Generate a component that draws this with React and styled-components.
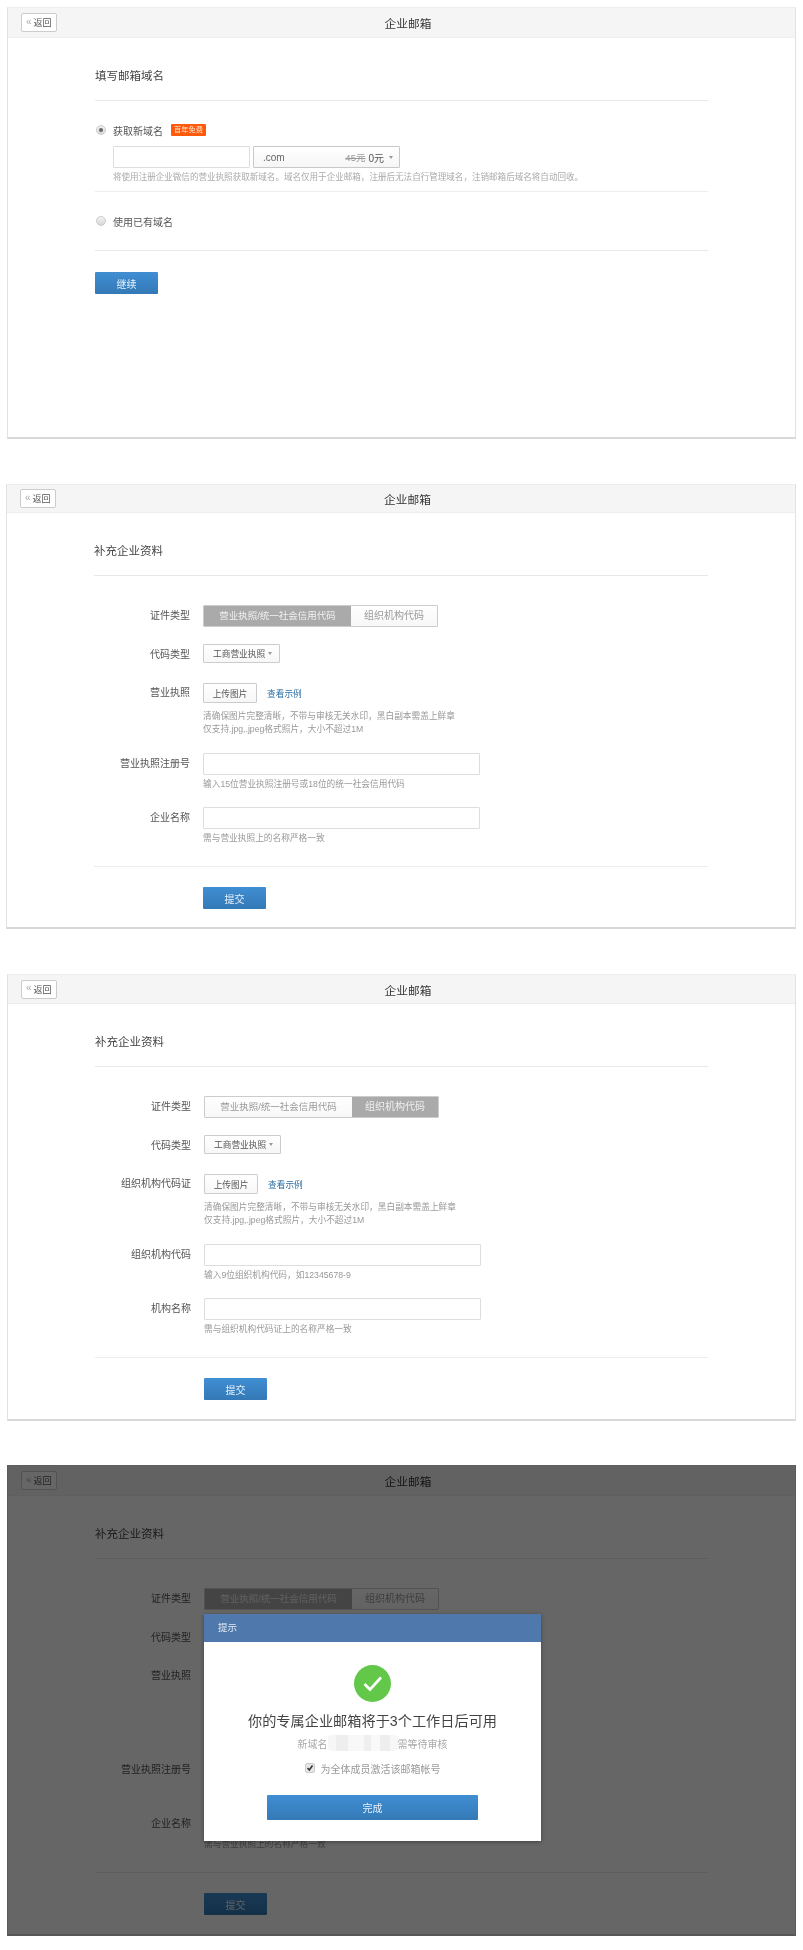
import React from "react";
import styled, { createGlobalStyle } from "styled-components";

const Global = createGlobalStyle`
  html, body { margin: 0; padding: 0; background: #fff; }
  * { box-sizing: border-box; }
  body { font-family: "Liberation Sans", "Noto Sans CJK SC", sans-serif; color: #333; }
`;

const Page = styled.div`
  width: 803px;
  height: 1950px;
  padding-top: 7px;
  overflow: hidden;
  filter: blur(0.45px);
`;

const Panel = styled.section`
  position: relative;
  width: ${(p) => p.$width || 789}px;
  min-height: ${(p) => p.$height}px;
  margin: ${(p) => p.$top || 0}px 0 0 ${(p) => p.$left}px;
  background: #fff;
  border: 1px solid #e2e2e2;
  border-top-color: #eee;
  border-bottom: 2px solid #d8d8d8;
`;

const Header = styled.header`
  display: grid;
  grid-template-columns: 1fr auto 1fr;
  align-items: center;
  height: ${(p) => p.$h}px;
  padding-left: 13px;
  background: #f5f5f5;
  border-bottom: 1px solid #eee;
`;

const BackButton = styled.button`
  justify-self: start;
  display: flex;
  align-items: center;
  gap: 2px;
  width: 36px;
  height: 19px;
  padding: 0 0 0 4px;
  font: 9px "Liberation Sans", "Noto Sans CJK SC", sans-serif;
  color: #555;
  background: #fff;
  border: 1px solid #ccc;
  border-radius: 2px;
  span { color: #aaa; font-size: 10px; line-height: 1; margin-top: -2px; }
`;

const Title = styled.h1`
  margin: 0;
  font-size: 11.7px;
  font-weight: 400;
  color: #333;
`;

const Body = styled.div`
  padding: 0 87px;
`;

const Heading = styled.h2`
  margin: 0;
  padding: 28px 0 14px;
  font-size: 11.5px;
  line-height: 20px;
  font-weight: 400;
  color: #444;
  border-bottom: 1px solid #e8e8e8;
`;

const OptionRow = styled.label`
  display: flex;
  align-items: center;
  height: 14px;
  margin-top: 22px;
  font-size: 10px;
  color: #555;
`;

const Radio = styled.span`
  position: relative;
  flex: none;
  width: 10px;
  height: 10px;
  margin: 0 7px 0 1px;
  border-radius: 50%;
  border: 1px solid #ccc;
  background: linear-gradient(#f2f2f2, #d8d8d8);
  ${(p) =>
    p.$on &&
    `&::after {
      content: "";
      position: absolute;
      left: 2px;
      top: 2px;
      width: 4px;
      height: 4px;
      border-radius: 50%;
      background: #666;
    }`}
`;

const Badge = styled.span`
  margin-left: 8px;
  width: 35px;
  height: 12px;
  line-height: 12px;
  text-align: center;
  font-size: 7.2px;
  color: #ffe3d0;
  background: #ff5a0a;
  border-radius: 1px;
`;

const DomainFields = styled.div`
  display: flex;
  gap: 3px;
  margin: 9px 0 0 18px;
`;

const TextInput = styled.div`
  width: ${(p) => p.$w}px;
  height: 22px;
  background: #fff;
  border: 1px solid #ddd;
  border-radius: 1px;
`;

const DomainSelect = styled.div`
  display: flex;
  align-items: center;
  width: 147px;
  height: 22px;
  padding: 0 6px 0 9px;
  font-size: 10px;
  color: #666;
  background: linear-gradient(#fff, #f6f6f6);
  border: 1px solid #c8c8c8;
  border-radius: 1px;
  s { margin-left: auto; color: #999; font-size: 9.5px; }
  b { margin: 0 5px 0 3px; font-weight: 400; color: #555; }
`;

const Caret = styled.i`
  display: inline-block;
  width: 0;
  height: 0;
  border: 2.5px solid transparent;
  border-top: 3px solid #999;
  border-bottom: 0;
`;

const DomainHint = styled.p`
  margin: 3px 0 0;
  padding: 0 0 8px 18px;
  font-size: 8.55px;
  line-height: 12px;
  color: #aaa;
  white-space: nowrap;
  border-bottom: 1px solid #eee;
`;

const SectionEnd = styled.div`
  margin-top: 22px;
  border-bottom: 1px solid #e8e8e8;
`;

const PrimaryButton = styled.button`
  display: block;
  width: ${(p) => p.$w || 63}px;
  height: ${(p) => p.$h || 22}px;
  margin: ${(p) => p.$m || 0};
  padding: 0;
  font: 10px "Liberation Sans", "Noto Sans CJK SC", sans-serif;
  color: #e6f1fb;
  background: linear-gradient(#408ed3, #3479b6);
  border: 0;
  border-radius: 1px;
`;

const Rows = styled.div`
  padding-top: 29px;
`;

const Row = styled.div`
  display: flex;
  align-items: flex-start;
  margin-top: ${(p) => p.$mt || 0}px;
`;

const Label = styled.div`
  flex: none;
  width: 96px;
  margin-right: 13px;
  height: ${(p) => p.$h}px;
  line-height: ${(p) => p.$h + (p.$nudge || 0)}px;
  font-size: 10px;
  text-align: right;
  color: #555;
  white-space: nowrap;
`;

const Field = styled.div`
  flex: none;
`;

const Segmented = styled.div`
  display: flex;
  width: 235px;
  height: 22px;
  border: 1px solid #ccc;
  border-radius: 1px;
`;

const Segment = styled.div`
  flex: ${(p) => (p.$wide ? "0 0 147px" : "1")};
  line-height: 20px;
  text-align: center;
  font-size: ${(p) => (p.$wide ? 9.5 : 10)}px;
  white-space: nowrap;
  color: ${(p) => (p.$on ? "#f0f0f0" : "#999")};
  background: ${(p) => (p.$on ? "#aaa" : "linear-gradient(#fff,#f7f7f7)")};
`;

const CodeSelect = styled.div`
  display: flex;
  align-items: center;
  gap: 3px;
  width: 77px;
  height: 19px;
  padding-left: 9px;
  font-size: 8.7px;
  color: #555;
  background: linear-gradient(#fff, #f7f7f7);
  border: 1px solid #ccc;
  border-radius: 1px;
`;

const UploadLine = styled.div`
  display: flex;
  align-items: center;
  gap: 10px;
`;

const UploadButton = styled.button`
  width: 54px;
  height: 20px;
  padding: 0;
  font: 8.7px "Liberation Sans", "Noto Sans CJK SC", sans-serif;
  color: #555;
  background: linear-gradient(#fff, #f7f7f7);
  border: 1px solid #ccc;
  border-radius: 1px;
`;

const SampleLink = styled.a`
  font-size: 8.7px;
  color: #2a6ea5;
`;

const Hint = styled.p`
  margin: ${(p) => p.$mt || 3}px 0 ${(p) => p.$mb || 0}px;
  font-size: 8.7px;
  line-height: 13px;
  color: #999;
  white-space: nowrap;
`;

const FormEnd = styled.div`
  margin-top: 21px;
  border-bottom: 1px solid #ececec;
`;

const Overlay = styled.div`
  position: absolute;
  inset: -1px -1px -2px -1px;
  background: rgba(0, 0, 0, 0.6);
`;

const Modal = styled.div`
  position: absolute;
  left: 197px;
  top: 149px;
  width: 337px;
  height: 227px;
  background: #fff;
  box-shadow: 0 1px 4px rgba(0, 0, 0, 0.35);
  display: flex;
  flex-direction: column;
  align-items: center;
`;

const ModalBar = styled.div`
  align-self: stretch;
  height: 28px;
  padding-left: 14px;
  line-height: 27px;
  font-size: 9.5px;
  color: #e4ecf5;
  background: #4f79ad;
`;

const SuccessIcon = styled.svg`
  display: block;
  width: 37px;
  height: 37px;
  margin-top: 23px;
`;

const ModalTitle = styled.h3`
  margin: 8px 0 0;
  font-size: 14.2px;
  line-height: 22px;
  font-weight: 400;
  color: #444;
  white-space: nowrap;
`;

const ModalSub = styled.div`
  display: flex;
  align-items: center;
  height: 16px;
  margin-top: 3px;
  font-size: 10px;
  color: #aaa;
`;

const Mosaic = styled.span`
  display: block;
  width: 70px;
  height: 16px;
  border-radius: 4px;
  background:
    linear-gradient(90deg, #f6f6f6 0 12%, #eeeeee 12% 28%, #f8f8f8 28% 52%, #efefef 52% 62%, #f9f9f9 62% 74%, #eeeeee 74% 88%, #f7f7f7 88%);
`;

const ModalCheck = styled.label`
  display: flex;
  align-items: center;
  gap: 6px;
  margin-top: 10px;
  height: 14px;
  font-size: 10px;
  color: #999;
`;

const CheckBox = styled.span`
  display: flex;
  align-items: center;
  justify-content: center;
  width: 10px;
  height: 10px;
  border: 1px solid #ccc;
  border-radius: 2px;
  background: #e6e6e6;
  svg { display: block; width: 8px; height: 8px; }
`;

const Radios = () => null;

function Shell({ title, left, top, height, headerH, width, children }) {
  return (
    <Panel $left={left} $top={top} $height={height} $width={width}>
      <Header $h={headerH}>
        <BackButton><span>«</span>返回</BackButton>
        <Title>企业邮箱</Title>
      </Header>
      {children}
    </Panel>
  );
}

function FormBody({ org, extra }) {
  return (
    <Body>
      <Heading>补充企业资料</Heading>
      <Rows>
        <Row>
          <Label $h={22}>证件类型</Label>
          <Field>
            <Segmented>
              <Segment $wide $on={!org}>营业执照/统一社会信用代码</Segment>
              <Segment $on={org}>组织机构代码</Segment>
            </Segmented>
          </Field>
        </Row>
        <Row $mt={17}>
          <Label $h={19} $nudge={2}>代码类型</Label>
          <Field>
            <CodeSelect>工商营业执照 <Caret /></CodeSelect>
          </Field>
        </Row>
        <Row $mt={20}>
          <Label $h={20}>{org ? "组织机构代码证" : "营业执照"}</Label>
          <Field>
            <UploadLine>
              <UploadButton>上传图片</UploadButton>
              <SampleLink>查看示例</SampleLink>
            </UploadLine>
            <Hint $mt={7} $mb={extra}>
              清确保图片完整清晰，不带与审核无关水印，黑白副本需盖上鲜章
              <br />
              仅支持.jpg,.jpeg格式照片，大小不超过1M
            </Hint>
          </Field>
        </Row>
        <Row $mt={17}>
          <Label $h={22}>{org ? "组织机构代码" : "营业执照注册号"}</Label>
          <Field>
            <TextInput $w={277} />
            <Hint>{org ? "输入9位组织机构代码，如12345678-9" : "输入15位营业执照注册号或18位的统一社会信用代码"}</Hint>
          </Field>
        </Row>
        <Row $mt={16}>
          <Label $h={22}>{org ? "机构名称" : "企业名称"}</Label>
          <Field>
            <TextInput $w={277} />
            <Hint>{org ? "需与组织机构代码证上的名称严格一致" : "需与营业执照上的名称严格一致"}</Hint>
          </Field>
        </Row>
      </Rows>
      <FormEnd />
      <PrimaryButton $m="20px 0 0 109px" $h={22}>提交</PrimaryButton>
    </Body>
  );
}

export default function App() {
  return (
    <Page>
      <Global />
      <Shell left={7} height={432} headerH={30}>
        <Body>
          <Heading>填写邮箱域名</Heading>
          <OptionRow>
            <Radio $on />
            获取新域名
            <Badge>首年免费</Badge>
          </OptionRow>
          <DomainFields>
            <TextInput $w={137} />
            <DomainSelect>
              .com
              <s>45元</s>
              <b>0元</b>
              <Caret />
            </DomainSelect>
          </DomainFields>
          <DomainHint>将使用注册企业微信的营业执照获取新域名。域名仅用于企业邮箱，注册后无法自行管理域名，注销邮箱后域名将自动回收。</DomainHint>
          <OptionRow>
            <Radio />
            使用已有域名
          </OptionRow>
          <SectionEnd />
          <PrimaryButton $m="21px 0 0">继续</PrimaryButton>
        </Body>
      </Shell>

      <Shell left={6} top={45} height={445} headerH={28} width={790}>
        <FormBody />
      </Shell>

      <Shell left={7} top={45} height={447} headerH={29}>
        <FormBody org />
      </Shell>

      <Shell left={7} top={44} height={471} headerH={30}>
        <FormBody extra={23} />
        <Overlay>
          <Modal>
            <ModalBar>提示</ModalBar>
            <SuccessIcon viewBox="0 0 37 37" aria-hidden="true">
              <circle cx="18.5" cy="18.5" r="18.5" fill="#63c84a" />
              <path d="M10.5 19 l5.5 5.5 L27 12.5" fill="none" stroke="#fff" strokeWidth="2.6" />
            </SuccessIcon>
            <ModalTitle>你的专属企业邮箱将于3个工作日后可用</ModalTitle>
            <ModalSub>新域名<Mosaic />需等待审核</ModalSub>
            <ModalCheck>
              <CheckBox>
                <svg viewBox="0 0 8 8" aria-hidden="true">
                  <path d="M1.5 4 L3.3 6 L6.5 1.5" fill="none" stroke="#333" strokeWidth="1.5" />
                </svg>
              </CheckBox>
              为全体成员激活该邮箱帐号
            </ModalCheck>
            <PrimaryButton $w={211} $h={25} $m="20px 0 0">完成</PrimaryButton>
          </Modal>
        </Overlay>
      </Shell>
    </Page>
  );
}
